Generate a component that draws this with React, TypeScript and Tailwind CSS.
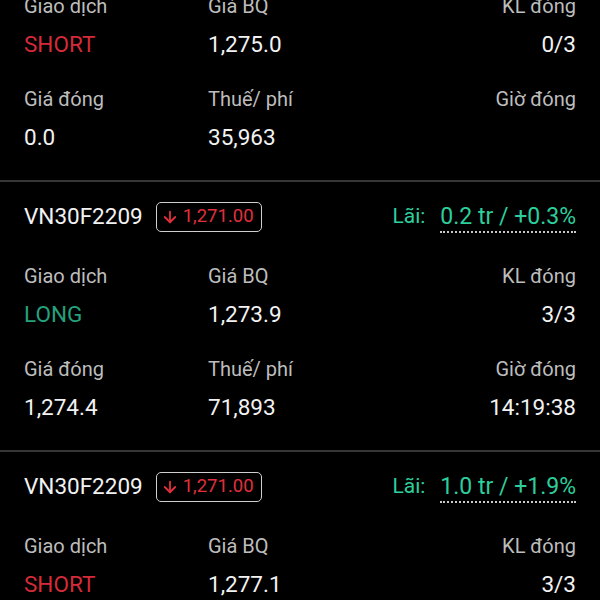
import { ArrowDown } from "lucide-react";

type Position = {
  symbol: string;
  price: string;
  pnl: string;
  side: "LONG" | "SHORT";
  avg: string;
  closedQty: string;
  closePrice: string;
  fee: string;
  closeTime: string;
};

const positions: Position[] = [
  {
    symbol: "VN30F2209",
    price: "1,271.00",
    pnl: "0.1 tr / +0.1%",
    side: "SHORT",
    avg: "1,275.0",
    closedQty: "0/3",
    closePrice: "0.0",
    fee: "35,963",
    closeTime: "",
  },
  {
    symbol: "VN30F2209",
    price: "1,271.00",
    pnl: "0.2 tr / +0.3%",
    side: "LONG",
    avg: "1,273.9",
    closedQty: "3/3",
    closePrice: "1,274.4",
    fee: "71,893",
    closeTime: "14:19:38",
  },
  {
    symbol: "VN30F2209",
    price: "1,271.00",
    pnl: "1.0 tr / +1.9%",
    side: "SHORT",
    avg: "1,277.1",
    closedQty: "3/3",
    closePrice: "",
    fee: "",
    closeTime: "",
  },
];

function Cell({ label, value, valueClass = "text-[#f2f2f2]", right = false }: { label: string; value: string; valueClass?: string; right?: boolean }) {
  return (
    <div className={`flex flex-col gap-[10px] ${right ? "items-end" : "items-start"}`}>
      <span className="text-[20px] leading-[28px] text-[#bdbdbd]">{label}</span>
      <span className={`text-[22.5px] leading-[28px] ${valueClass}`}>{value || "\u00a0"}</span>
    </div>
  );
}

function PositionCard({ p }: { p: Position }) {
  const sideColor = p.side === "LONG" ? "text-[#25a17b]" : "text-[#d52b38]";
  return (
    <div className="border-t-2 border-[#363636] px-6 pb-[29px]">
      {/* Header: symbol, last price, P&L */}
      <div className="flex h-[70px] items-center">
        <span className="text-[22.5px] text-[#f2f2f2]">{p.symbol}</span>
        <span className="ml-[13px] flex h-[30px] items-center gap-[4px] rounded-[5px] border-[1.5px] border-[#cfcfcf] pl-[4px] pr-[7px] text-[18.5px] text-[#e0303c]">
          <ArrowDown size={18} strokeWidth={2.4} />
          {p.price}
        </span>
        <div className="ml-auto flex items-center gap-[15px] text-[#2ccf9c]">
          <span className="text-[21px]">Lãi:</span>
          <span className="relative text-[23px] leading-[28px]">
            {p.pnl}
            <span className="absolute -bottom-[2px] left-0 right-0 border-b-2 border-dotted border-[#c8c8c8]" />
          </span>
        </div>
      </div>

      <div className="mt-[10px] grid grid-cols-[184px_1fr_auto] gap-y-[27px]">
        <Cell label="Giao dịch" value={p.side} valueClass={sideColor} />
        <Cell label="Giá BQ" value={p.avg} />
        <Cell label="KL đóng" value={p.closedQty} right />
        <Cell label="Giá đóng" value={p.closePrice} />
        <Cell label="Thuế/ phí" value={p.fee} />
        <Cell label="Giờ đóng" value={p.closeTime} right />
      </div>
    </div>
  );
}

export default function App() {
  return (
    <div className="h-[600px] w-[600px] overflow-hidden bg-black" style={{ fontFamily: "Roboto, 'Noto Sans', sans-serif" }}>
      <div className="-mt-[90px]">
        {positions.map((p, i) => (
          <PositionCard key={i} p={p} />
        ))}
      </div>
    </div>
  );
}
